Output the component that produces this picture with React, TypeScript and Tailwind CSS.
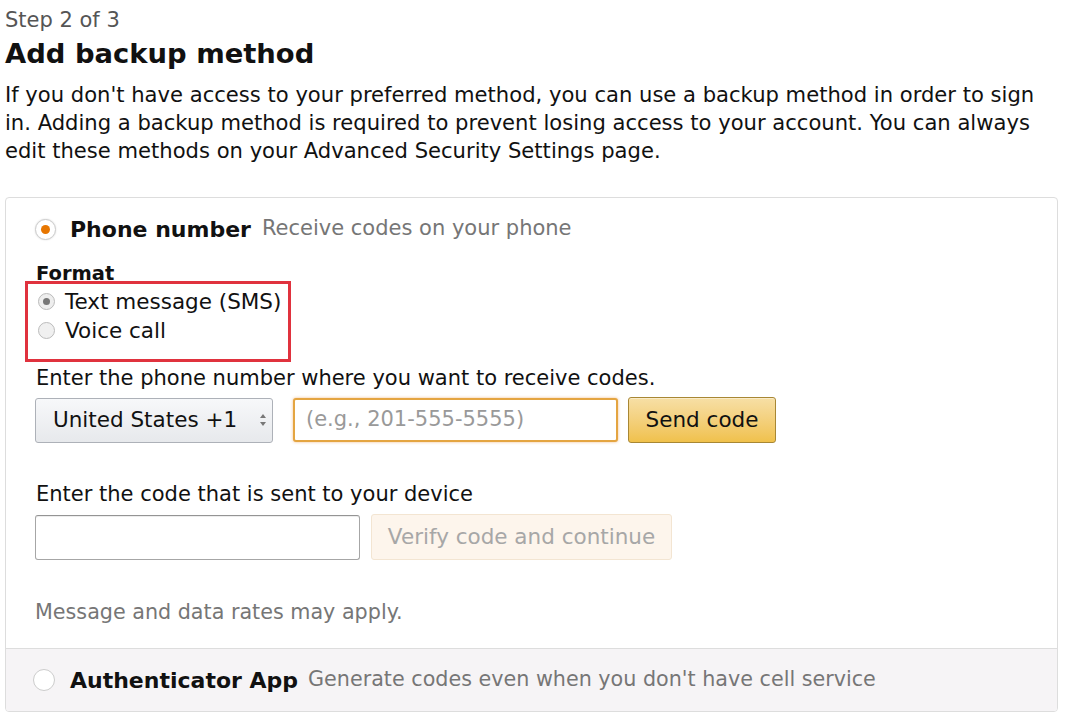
export default function App() {
  return (
    <div className="bg-white min-h-screen font-['DejaVu_Sans',sans-serif] text-[#111] px-[5px] pt-[6px] w-[1072px] h-[722px] overflow-hidden">
      <div className="text-[21px] leading-[28px] text-[#555]">Step 2 of 3</div>
      <h1 className="mt-[2px] text-[27.4px] leading-[36px] font-bold">Add backup method</h1>
      <p className="mt-[9px] text-[21.1px] leading-[28px]">
        <span className="block whitespace-nowrap">If you don't have access to your preferred method, you can use a backup method in order to sign</span>
        <span className="block whitespace-nowrap">in. Adding a backup method is required to prevent losing access to your account. You can always</span>
        <span className="block whitespace-nowrap">edit these methods on your Advanced Security Settings page.</span>
      </p>

      {/* Options card */}
      <div className="mt-[32px] w-[1053px] border border-[#ddd] rounded-[4px] overflow-hidden">
        <div className="pl-[29px] pt-[17px] pb-[23px]">
          <div className="flex items-center h-[28px]">
            <span className="w-[21px] h-[21px] rounded-full border border-[#ccc] bg-white flex items-center justify-center shadow-[0_0_2px_rgba(0,0,0,0.15)]">
              <span className="w-[9px] h-[9px] rounded-full bg-[#e77600]" />
            </span>
            <span className="ml-[14px] text-[22px] font-bold">Phone number</span>
            <span className="ml-[11px] text-[21px] text-[#767676]">Receive codes on your phone</span>
          </div>

          <div className="mt-[20px] ml-[1px] text-[19.5px] leading-[22px] font-bold">Format</div>
          <div className="-mt-[4px] -ml-[10px] w-[266px] border-[3px] border-[#e0323e] pl-[10px] pt-[3px] pb-[14px]">
            <label className="flex items-center gap-[10px] text-[21.5px] leading-[29px]">
              <span className="w-[17px] h-[17px] rounded-full border border-[#bbb] bg-[#eee] flex items-center justify-center">
                <span className="w-[7px] h-[7px] rounded-full bg-[#777]" />
              </span>
              Text message (SMS)
            </label>
            <label className="flex items-center gap-[10px] text-[21.5px] leading-[29px]">
              <span className="w-[17px] h-[17px] rounded-full border border-[#bbb] bg-[#f0f0f0]" />
              Voice call
            </label>
          </div>

          <div className="mt-[3px] ml-[1px] text-[21px] leading-[26px]">Enter the phone number where you want to receive codes.</div>
          <div className="flex items-center mt-[6px] h-[46px]">
            <div className="w-[238px] h-[45px] rounded-[3px] border border-[#adb1b8] bg-gradient-to-b from-[#f7f8fa] to-[#e7e9ec] flex items-center justify-between pl-[17px] pr-[6px] text-[21.5px]">
              <span>United States +1</span>
              <svg width="6" height="14" viewBox="0 0 6 14">
                <path d="M0 5 L3 1 L6 5 Z" fill="#777" />
                <path d="M0 9 L3 13 L6 9 Z" fill="#777" />
              </svg>
            </div>
            <div className="ml-[20px] w-[325px] h-[44px] rounded-[3px] border-2 border-[#e4a541] shadow-[0_0_3px_rgba(228,121,17,0.5)] bg-white flex items-center pl-[11px] text-[21px] text-[#999]">
              (e.g., 201-555-5555)
            </div>
            <button className="ml-[10px] w-[148px] h-[46px] rounded-[3px] border border-[#a88734] bg-gradient-to-b from-[#f7dfa5] to-[#f0c14b] text-[21.5px] text-[#111] shadow-[inset_0_1px_0_rgba(255,255,255,0.4)]">
              Send code
            </button>
          </div>

          <div className="mt-[38px] ml-[1px] text-[21px] leading-[26px]">Enter the code that is sent to your device</div>
          <div className="flex items-center mt-[7px] h-[46px]">
            <div className="w-[325px] h-[45px] rounded-[3px] border border-[#a6a6a6] border-t-[#949494] bg-white shadow-[inset_0_1px_0_rgba(0,0,0,0.07)]" />
            <button className="ml-[11px] w-[301px] h-[46px] rounded-[3px] border border-[#f3e5d2] bg-[#fdf5ec] text-[21.5px] text-[#a7a7a7]">
              Verify code and continue
            </button>
          </div>

          <div className="mt-[39px] text-[20.7px] leading-[26px] text-[#767676]">Message and data rates may apply.</div>
        </div>

        <div className="border-t border-[#ddd] bg-[#f6f4f6] h-[63px] pl-[27px] flex items-center">
          <span className="w-[22px] h-[22px] rounded-full border border-[#ccc] bg-white" />
          <span className="ml-[15px] text-[22px] font-bold">Authenticator App</span>
          <span className="ml-[10px] text-[20.7px] text-[#767676]">Generate codes even when you don't have cell service</span>
        </div>
      </div>
    </div>
  );
}
